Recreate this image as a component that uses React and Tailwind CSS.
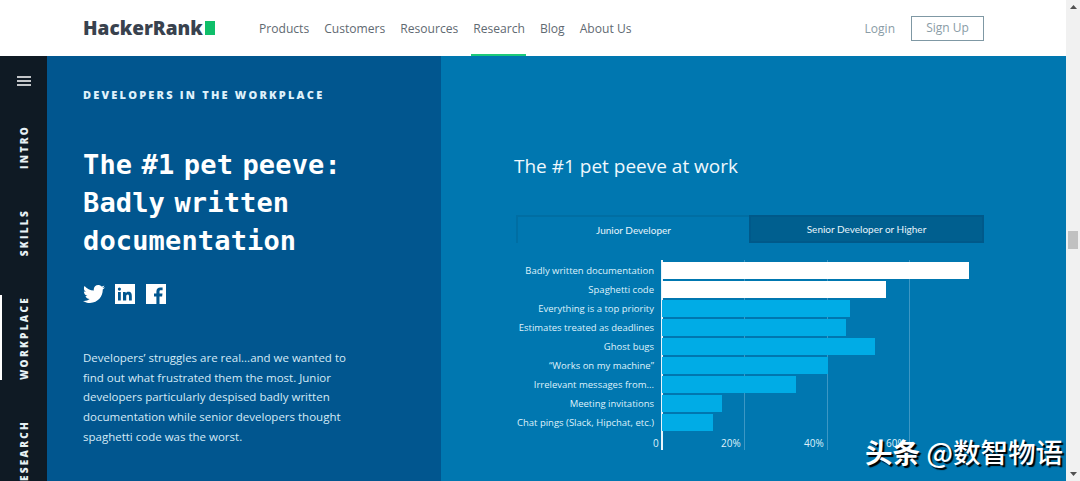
import React from 'react';
import { FaTwitter } from 'react-icons/fa';

const navItems = ['Products', 'Customers', 'Resources', 'Research', 'Blog', 'About Us'];

const bars = [
  { label: 'Badly written documentation', width: 307, top: true },
  { label: 'Spaghetti code', width: 224, top: true },
  { label: 'Everything is a top priority', width: 188 },
  { label: 'Estimates treated as deadlines', width: 184 },
  { label: 'Ghost bugs', width: 213 },
  { label: '“Works on my machine”', width: 166 },
  { label: 'Irrelevant messages from...', width: 134 },
  { label: 'Meeting invitations', width: 60 },
  { label: 'Chat pings (Slack, Hipchat, etc.)', width: 51 },
];

function SideLabel({ children, active }) {
  return (
    <div className="relative w-full flex justify-center pl-[2px] shrink-0">
      {active && <div className="absolute left-0 top-[-1px] bottom-0 w-[2px] bg-white" />}
      <span className="[writing-mode:vertical-rl] rotate-180 text-[10px] font-extrabold tracking-[2.3px] text-[#e8f1f5] font-['Open_Sans',sans-serif]">
        {children}
      </span>
    </div>
  );
}

function LinkedinIcon() {
  return (
    <svg width="20" height="20" viewBox="0 0 20 20">
      <rect width="20" height="20" fill="#fff" />
      <g fill="#01568f">
        <rect x="3" y="8" width="2.8" height="8.5" />
        <circle cx="4.4" cy="5.1" r="1.6" />
        <path d="M8 8h2.7v1.2c.4-.7 1.3-1.4 2.7-1.4 2.9 0 3.4 1.9 3.4 4.4v4.3H14v-3.8c0-.9 0-2.1-1.3-2.1s-1.5 1-1.5 2v3.9H8z" />
      </g>
    </svg>
  );
}

function FacebookIcon() {
  return (
    <svg width="20" height="20" viewBox="0 0 20 20">
      <rect width="20" height="20" fill="#fff" />
      <path
        fill="#01568f"
        d="M13.5 20v-7.5h2.6l.4-3h-3V7.6c0-.9.3-1.4 1.5-1.4h1.6V3.5c-.3 0-1.2-.1-2.3-.1-2.3 0-3.9 1.4-3.9 4v2.1H8v3h2.4V20z"
      />
    </svg>
  );
}

export default function App() {
  return (
    <div className="relative flex w-[1080px] h-[481px] overflow-hidden bg-white font-['Open_Sans',sans-serif]">
      <div className="flex flex-col w-[1066px] shrink-0">
        {/* Top nav */}
        <header className="flex items-center h-[56px] shrink-0 bg-white pl-[83px]">
          <div className="flex items-center w-[176px] shrink-0">
            <span className="text-[19px] font-extrabold text-[#39424e] leading-none">HackerRank</span>
            <span className="w-[10px] h-[14px] bg-[#0fbf6a] ml-[2px]" />
          </div>
          <nav className="flex gap-[15px] h-full">
            {navItems.map((item) => (
              <a key={item} className="relative flex items-center pt-[2px] text-[12.1px] text-[#5f6a72]">
                {item}
                {item === 'Research' && (
                  <span className="absolute left-[-2px] right-[-1px] bottom-0 h-[2px] bg-[#1dc97a]" />
                )}
              </a>
            ))}
          </nav>
          <div className="ml-auto flex items-center gap-[16px] pr-[82px] pt-[1px]">
            <a className="text-[12px] text-[#8a9ca6]">Login</a>
            <a className="flex items-center justify-center w-[73px] h-[25px] -mt-[1px] border border-[#7f98a4] text-[12px] text-[#8a9ca6]">
              Sign Up
            </a>
          </div>
        </header>

        <div className="flex flex-1 min-h-0">
          {/* Section rail */}
          <aside className="flex flex-col items-center w-[47px] shrink-0 bg-[#0f1a24] overflow-hidden">
            <svg className="mt-[20px] shrink-0" width="14" height="10" viewBox="0 0 14 10">
              <path d="M0 1h14M0 5h14M0 9h14" stroke="#fff" strokeWidth="1.4" />
            </svg>
            <div className="flex flex-col items-center gap-[40px] mt-[39px] w-full">
              <SideLabel>INTRO</SideLabel>
              <SideLabel>SKILLS</SideLabel>
              <SideLabel active>WORKPLACE</SideLabel>
              <SideLabel>RESEARCH</SideLabel>
            </div>
          </aside>

          {/* Story column */}
          <section className="w-[394px] shrink-0 bg-[#01568f] pl-[36px] pt-[32px]">
            <h2 className="text-[11px] font-extrabold tracking-[2.2px] text-[#dff1fb] leading-[14px]">
              DEVELOPERS IN THE WORKPLACE
            </h2>
            <h1 className="mt-[44px] text-[27px] font-bold tracking-[0.15px] leading-[38px] [word-spacing:-7px] text-white font-['DejaVu_Sans_Mono',monospace]">
              The #1 pet peeve:
              <br />
              Badly written
              <br />
              documentation
            </h1>
            <div className="flex items-center mt-[23px] text-white">
              <FaTwitter className="w-[22px] h-[22px]" />
              <div className="ml-[10px]"><LinkedinIcon /></div>
              <div className="ml-[11px]"><FacebookIcon /></div>
            </div>
            <p className="mt-[43px] w-[270px] text-[11.5px] leading-[19.7px] text-[#d5eaf6]">
              Developers’ struggles are real...and we wanted to find out what frustrated them the most. Junior developers particularly despised badly written documentation while senior developers thought spaghetti code was the worst.
            </p>
          </section>

          {/* Chart column */}
          <section className="flex-1 bg-[#0077b0] pl-[73px] pt-[97px]">
            <h2 className="text-[19px] leading-[26px] text-[#eef8fd]">The #1 pet peeve at work</h2>
            <div className="flex w-[468px] h-[28px] ml-[2px] mt-[36px] text-[10px] font-['Lato',sans-serif] text-[#e6f4fb]">
              <div className="flex-1 flex items-center justify-center border-t-2 border-l-2 border-[#006ea3]">
                Junior Developer
              </div>
              <div className="flex-1 flex items-center justify-center bg-[#005f8f] border-2 border-[#00598a]">
                Senior Developer or Higher
              </div>
            </div>

            <div className="relative mt-[19px] ml-[2px] w-[468px]">
              {/* Gridlines */}
              <div className="absolute left-[228px] top-[-2px] h-[190px] w-px bg-[#3c97c4]" />
              <div className="absolute left-[311px] top-[-2px] h-[190px] w-px bg-[#3c97c4]" />
              <div className="absolute left-[393px] top-[-2px] h-[190px] w-px bg-[#3c97c4]" />
              <div className="absolute left-[145px] top-[-2px] h-[190px] w-[2px] bg-[#e8f5fb]" />

              <div className="relative flex flex-col gap-[2px]">
                {bars.map((bar) => (
                  <div key={bar.label} className="flex items-center h-[17px]">
                    <span className="w-[140px] -ml-[2px] mr-[8px] shrink-0 text-right whitespace-nowrap text-[9.5px] leading-none text-[#dff1fb]">
                      {bar.label}
                    </span>
                    <div
                      className={`h-full ${bar.top ? 'bg-white' : 'bg-[#00ace6]'}`}
                      style={{ width: bar.width }}
                    />
                  </div>
                ))}
              </div>

              <div className="relative h-[14px] mt-[5px] text-[10px] leading-[14px] text-[#dff1fb]">
                <span className="absolute left-[137px]">0</span>
                <span className="absolute left-[205px]">20%</span>
                <span className="absolute left-[288px]">40%</span>
                <span className="absolute left-[370px]">60%</span>
              </div>
            </div>
          </section>
        </div>
      </div>

      {/* Browser scrollbar */}
      <div className="flex flex-col items-center w-[14px] shrink-0 bg-[#f1f1f1]">
        <svg className="mt-[5px]" width="7" height="4" viewBox="0 0 7 4">
          <path d="M3.5 0L7 4H0z" fill="#505050" />
        </svg>
        <div className="w-[10px] h-[18px] mt-[222px] bg-[#c1c1c1]" />
        <svg className="mt-auto mb-[5px]" width="7" height="4" viewBox="0 0 7 4">
          <path d="M0 0h7L3.5 4z" fill="#505050" />
        </svg>
      </div>

      {/* Watermark */}
      <div className="absolute left-[865px] top-[431px] text-[27.5px] leading-[40px] font-medium text-white whitespace-nowrap [text-shadow:2px_2px_1px_#000] font-['Noto_Sans_CJK_SC',sans-serif]">
        <span className="font-bold">头条</span> @数智物语
      </div>
    </div>
  );
}
